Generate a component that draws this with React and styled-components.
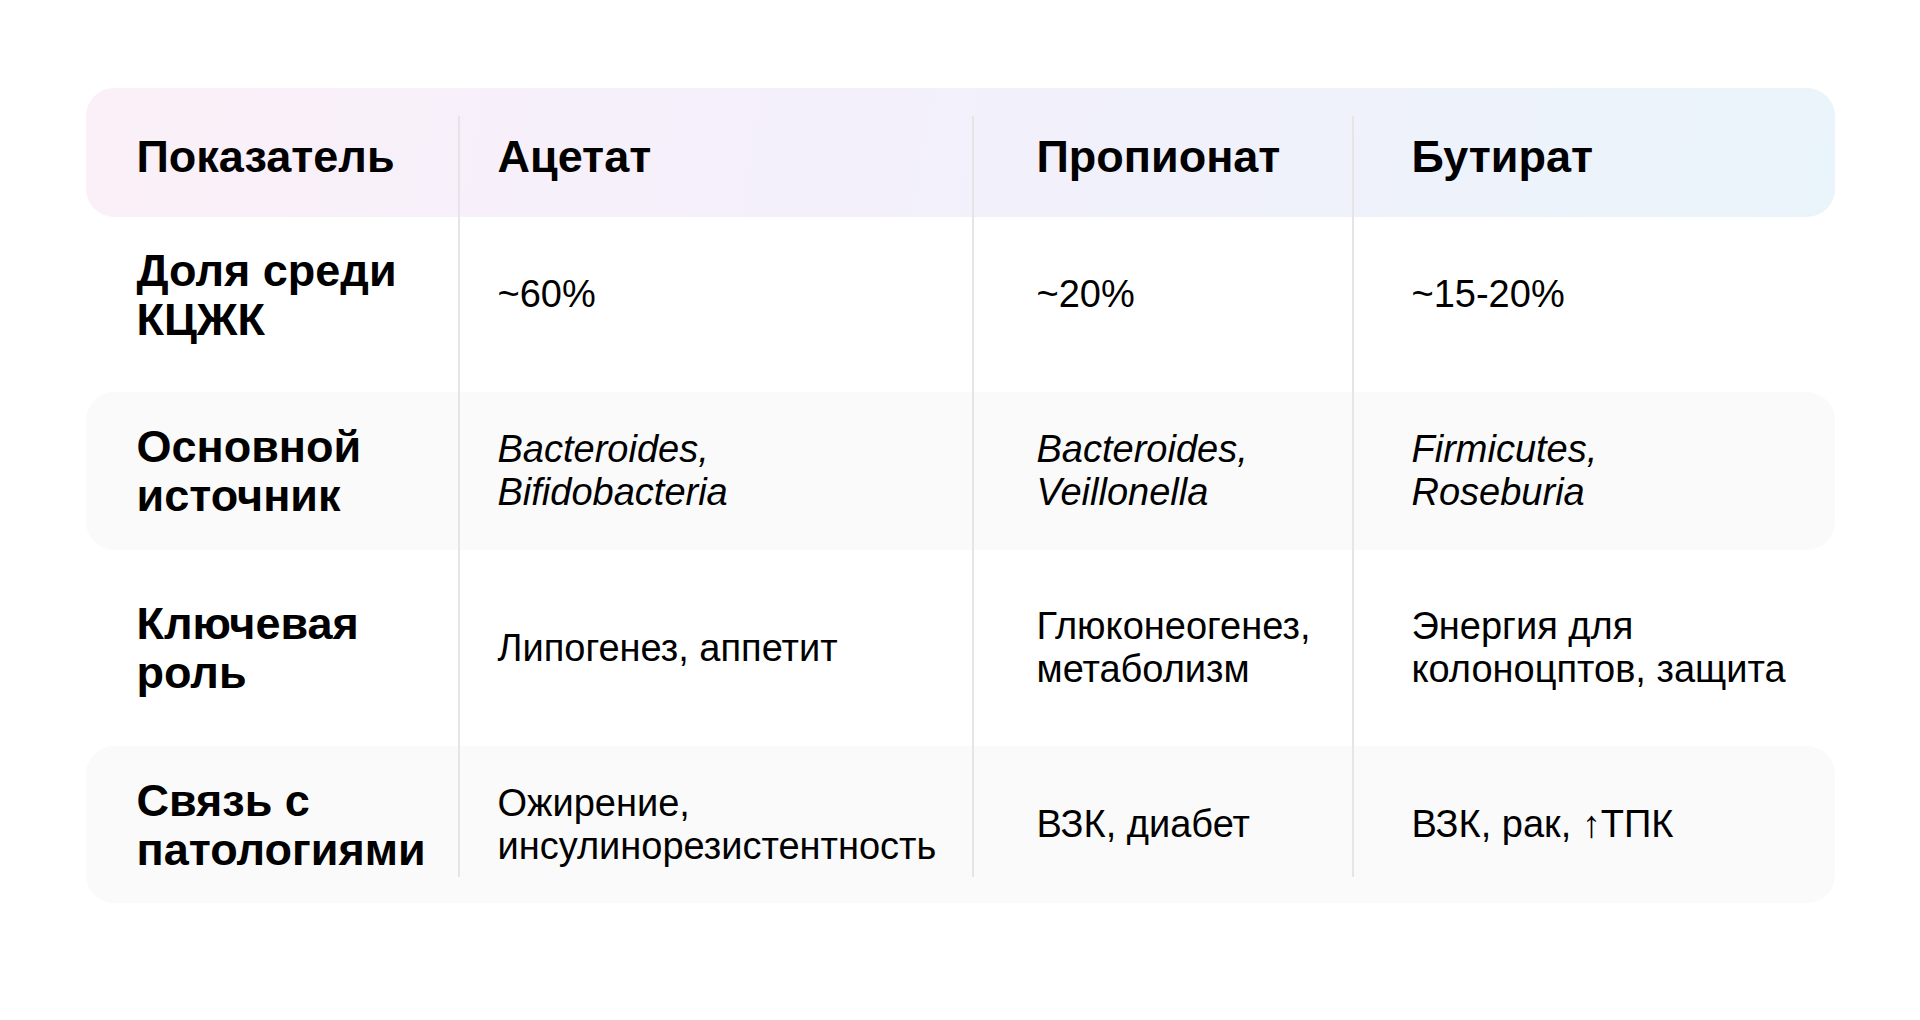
import styled, { createGlobalStyle } from 'styled-components'

// колонки: ширина и отступ текста слева
const columns = [
    { width: 372, pad: 51 },
    { width: 514, pad: 40 },
    { width: 380, pad: 65 },
    { width: 483, pad: 60 },
];
const template = columns.map(c => `${c.width}px`).join(' ');

const head = ['Показатель', 'Ацетат', 'Пропионат', 'Бутират'];

const rows = [
    {
        label: ['Доля среди', 'КЦЖК'],
        cells: [['~60%'], ['~20%'], ['~15-20%']],
        height: 175, shift: 20, striped: false,
    },
    {
        label: ['Основной', 'источник'],
        cells: [['Bacteroides,', 'Bifidobacteria'], ['Bacteroides,', 'Veillonella'], ['Firmicutes,', 'Roseburia']],
        italic: true,
        height: 158, shift: 0, striped: true,
    },
    {
        label: ['Ключевая', 'роль'],
        cells: [['Липогенез, аппетит'], ['Глюконеогенез,', 'метаболизм'], ['Энергия для', 'колоноцптов, защита']],
        height: 196, shift: 0, striped: false,
    },
    {
        label: ['Связь с', 'патологиями'],
        cells: [['Ожирение,', 'инсулинорезистентность'], ['ВЗК, диабет'], ['ВЗК, рак, ↑ТПК']],
        height: 157, shift: 0, striped: true,
    },
];

const Lines = ({ lines }) => lines.map((l, i) => <span key={i}>{l}</span>)

const App = () => {
    return (
        <>
            <GlobalStyle />
            <Table>
                <HeadRow>
                    {head.map((h, i) => (
                        <HeadCell key={h} $pad={columns[i].pad}>{h}</HeadCell>
                    ))}
                </HeadRow>

                {rows.map((row, r) => (
                    <Row key={r} $height={row.height} $shift={row.shift} $striped={row.striped}>
                        <LabelCell $pad={columns[0].pad}>
                            <Lines lines={row.label} />
                        </LabelCell>
                        {row.cells.map((cell, i) => (
                            <DataCell key={i} $pad={columns[i + 1].pad} $italic={row.italic}>
                                <Lines lines={cell} />
                            </DataCell>
                        ))}
                    </Row>
                ))}

                <Dividers>
                    {columns.map((c, i) => <DividerCol key={i} $first={i === 0} />)}
                </Dividers>
            </Table>
        </>
    )
}

export default App

const GlobalStyle = createGlobalStyle`
    html, body {
        margin: 0;
        padding: 0;
        background: #ffffff;
    }
    body {
        font-family: 'Liberation Sans', Arial, sans-serif;
        color: #000000;
    }
`

const Table = styled.div`
    position: relative;
    width: 1749px;
    margin: 88px auto 0;
    display: flex;
    flex-direction: column;
`

const HeadRow = styled.div`
    display: grid;
    grid-template-columns: ${template};
    align-items: center;
    height: 129px;
    box-sizing: border-box;
    padding-top: 9px;
    border-radius: 28px;
    background: linear-gradient(100deg, #fbf0f8 0%, #f4f0fb 40%, #f0f1fb 65%, #eaf4fb 100%);
`

const HeadCell = styled.div`
    padding-left: ${p => p.$pad}px;
    font-size: 45px;
    font-weight: 700;
    line-height: 48px;
    white-space: nowrap;
`

const Row = styled.div`
    display: grid;
    grid-template-columns: ${template};
    align-items: center;
    height: ${p => p.$height}px;
    box-sizing: border-box;
    padding-bottom: ${p => p.$shift}px;
    border-radius: 28px;
    background: ${p => p.$striped ? '#fafafa' : 'transparent'};
`

const LabelCell = styled.div`
    display: flex;
    flex-direction: column;
    padding-left: ${p => p.$pad}px;
    font-size: 45px;
    font-weight: 700;
    line-height: 49px;
    white-space: nowrap;
`

const DataCell = styled.div`
    display: flex;
    flex-direction: column;
    padding-left: ${p => p.$pad}px;
    font-size: 38px;
    line-height: 43px;
    font-style: ${p => p.$italic ? 'italic' : 'normal'};
    white-space: nowrap;
`

// вертикальные разделители поверх строк
const Dividers = styled.div`
    position: absolute;
    top: 28px;
    bottom: 26px;
    left: 0;
    right: 0;
    display: grid;
    grid-template-columns: ${template};
    pointer-events: none;
`

const DividerCol = styled.div`
    border-left: ${p => p.$first ? 'none' : '2px solid #e5e5e5'};
`
